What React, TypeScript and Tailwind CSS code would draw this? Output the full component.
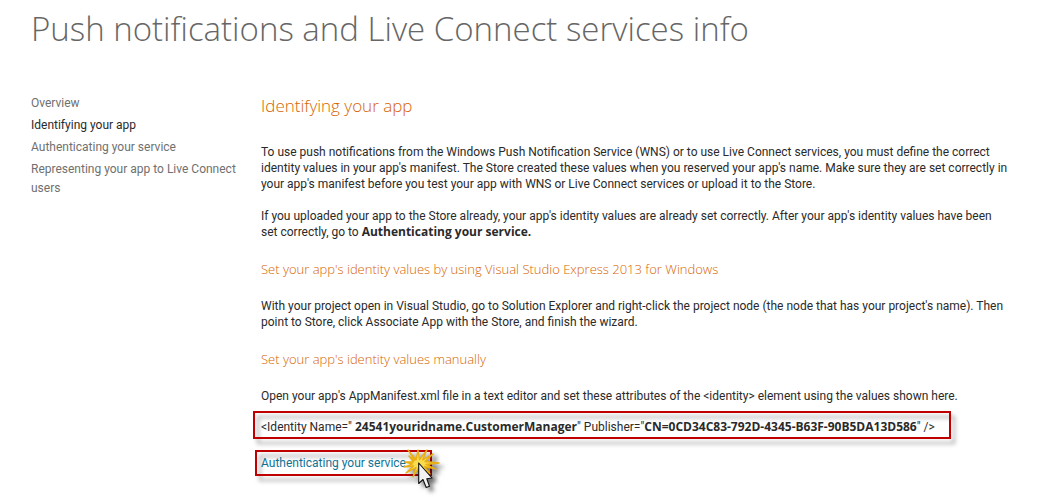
import type { ReactNode } from "react";

const topics = [
  { label: "Overview", current: false },
  { label: "Identifying your app", current: true },
  { label: "Authenticating your service", current: false },
  { label: "Representing your app to Live Connect users", current: false },
];

function Highlight() {
  return (
    <span
      aria-hidden="true"
      className="pointer-events-none absolute inset-0 border-2 border-[#c00000] drop-shadow-[4px_5px_2px_rgba(0,0,0,0.35)]"
    />
  );
}

function SubHeading({ children }: { children: ReactNode }) {
  return (
    <h3 className="my-[19px] font-['Open_Sans',sans-serif] text-[13px] font-light leading-5 text-[#d66400]">
      {children}
    </h3>
  );
}

function Strong({ children }: { children: ReactNode }) {
  return <strong className="font-['Open_Sans',sans-serif] font-bold leading-none">{children}</strong>;
}

function ClickPointer() {
  return (
    <svg
      aria-hidden="true"
      className="pointer-events-none absolute -right-2 -top-1 h-[48px] w-[42px] overflow-visible drop-shadow-[4px_4px_2px_rgba(0,0,0,0.5)]"
      viewBox="0 0 42 48"
    >
      <path
        d="M10 4 L18 14 L20 4 L21.500 13.500 L29 4 L24.500 14 L35 8 L27 15.500 L41 17 L28 18.500 L38 23 L26.500 20.500 L32 28 L24 22 L24 29 L20.500 22 L15 31 L18 21.500 L8 27 L15.500 20 L6 21 L14.500 18 L7 16 L15.500 16 L11 10 L16.500 14.500 Z"
        fill="#f8dc50"
        stroke="#e9ae12"
        strokeWidth="1.3"
        strokeLinejoin="round"
      />
      <path
        d="M20.700 17 L20.700 37.500 L25 33.500 L28.200 41.500 L31.500 40.200 L28.800 32.800 L34 32 Z"
        fill="#f2f2f2"
        stroke="#111111"
        strokeWidth="1.1"
        strokeLinejoin="round"
      />
    </svg>
  );
}

export default function App() {
  return (
    <div className="min-h-screen bg-white pl-[31px] pr-[35px] pt-1 font-['Roboto','Noto_Sans',sans-serif] text-xs text-[#2a2a2a]">
      <h1 className="font-['Open_Sans',sans-serif] text-[33px] font-light leading-[50px] text-[#666666]">
        Push notifications and Live Connect services info
      </h1>
      <div className="mt-[38px] flex items-start">
        <nav aria-label="Topics" className="w-[230px] shrink-0 pr-4 pt-0.5">
          <ul className="flex flex-col gap-[3px]">
            {topics.map((topic) => (
              <li key={topic.label} className="leading-[19px]">
                <a
                  href="#"
                  aria-current={topic.current ? "page" : undefined}
                  className={topic.current ? "text-[#2a2a2a]" : "text-[#707070]"}
                >
                  {topic.label}
                </a>
              </li>
            ))}
          </ul>
        </nav>
        <main className="min-w-0 flex-1 leading-4">
          <h2 className="font-['Open_Sans',sans-serif] text-[17px] font-light leading-7 text-[#d66400]">
            Identifying your app
          </h2>
          <p className="mt-6">
            To use push notifications from the Windows Push Notification Service (WNS) or to use Live Connect services, you must define the correct
            identity values in your app's manifest. The Store created these values when you reserved your app's name. Make sure they are set correctly in
            your app's manifest before you test your app with WNS or Live Connect services or upload it to the Store.
          </p>
          <p className="mt-4">
            If you uploaded your app to the Store already, your app's identity values are already set correctly. After your app's identity values have been
            set correctly, go to <Strong>Authenticating your service.</Strong>
          </p>
          <SubHeading>Set your app's identity values by using Visual Studio Express 2013 for Windows</SubHeading>
          <p>
            With your project open in Visual Studio, go to Solution Explorer and right-click the project node (the node that has your project's name). Then
            point to Store, click Associate App with the Store, and finish the wizard.
          </p>
          <SubHeading>Set your app's identity values manually</SubHeading>
          <p>
            Open your app's AppManifest.xml file in a text editor and set these attributes of the &lt;identity&gt; element using the values shown here.
          </p>
          <div className="relative -ml-2 mt-[7px] w-fit pb-1 pl-2 pr-4 pt-2">
            &lt;Identity Name=" <Strong>24541youridname.CustomerManager</Strong>" Publisher="
            <Strong>CN=0CD34C83-792D-4345-B63F-90B5DA13D586</Strong>" /&gt;
            <Highlight />
          </div>
          <div className="relative -ml-1.5 mt-[11px] w-fit py-[5px] pl-1.5 pr-[26px]">
            <a href="#" className="text-[#0f7396]">
              Authenticating your service
            </a>
            <Highlight />
            <ClickPointer />
          </div>
        </main>
      </div>
    </div>
  );
}
